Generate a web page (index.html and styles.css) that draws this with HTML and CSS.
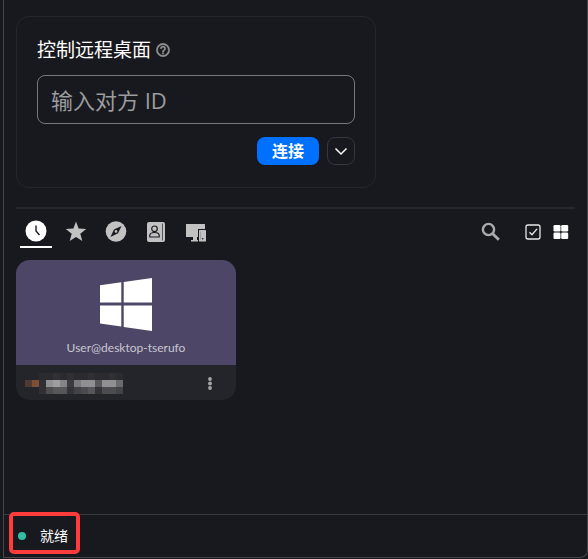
FILE: index.html
```
<!DOCTYPE html>
<html lang="zh-CN">
<head>
<meta charset="utf-8">
<meta name="viewport" content="width=device-width, initial-scale=1">
<title>控制远程桌面</title>
<link rel="stylesheet" href="styles.css">
</head>
<body>
<div class="window">
  <main class="main">
    <form class="connect">
      <div class="connect-head">
        <label class="connect-title" for="peer-id">控制远程桌面</label>
        <svg class="help" viewBox="0 0 24 24"><path d="M11 18h2v-2h-2v2zm1-16a10 10 0 1 0 0 20 10 10 0 0 0 0-20zm0 18a8 8 0 1 1 0-16 8 8 0 0 1 0 16zm0-14a4 4 0 0 0-4 4h2c0-1.100.9-2 2-2s2 .9 2 2c0 2-3 1.750-3 5h2c0-2.250 3-2.500 3-5a4 4 0 0 0-4-4z" stroke="currentColor" stroke-width=".7"/></svg>
      </div>
      <input class="peer-id" id="peer-id" type="text" placeholder="输入对方 ID">
      <div class="connect-actions">
        <button class="btn-connect" type="button">连接</button>
        <button class="btn-more" type="button" aria-label="更多">
          <svg viewBox="0 0 14 14"><path d="M1.500 4.500 7 10l5.500-5.500" fill="none" stroke="currentColor" stroke-width="1.500"/></svg>
        </button>
      </div>
    </form>

    <nav class="toolbar">
      <div class="tabs">
        <button class="tab tab-active" type="button" aria-label="最近">
          <svg viewBox="0 0 22 22"><circle cx="11" cy="11" r="10.500" fill="currentColor"/><path d="M11 5.500V11l3.500 4" fill="none" stroke="#18191e" stroke-width="1.400"/></svg>
        </button>
        <button class="tab" type="button" aria-label="收藏">
          <svg viewBox="0 0 22 22"><path fill="currentColor" d="M11 1.500l2.600 7 7.600.4-5.900 4.800 2 7.300L11 17l-6.300 4 2-7.300L.8 8.900l7.600-.4z"/></svg>
        </button>
        <button class="tab" type="button" aria-label="发现">
          <svg viewBox="0 0 22 22"><circle cx="11" cy="11.500" r="10.300" fill="currentColor"/><path d="M16.500 6 13 13.200 5.500 17 9 9.600z" fill="#18191e"/><circle cx="11" cy="11.400" r="1.300" fill="currentColor"/></svg>
        </button>
        <button class="tab" type="button" aria-label="地址簿">
          <svg viewBox="0 0 22 22"><rect x="2" y="2" width="18" height="20" rx="2" fill="currentColor"/><path d="M17.500 3.500v17" stroke="#55565a" stroke-width="1"/><g fill="none" stroke="#18191e" stroke-width="1.200"><circle cx="9.500" cy="8.800" r="2.800"/><path d="M4.800 17v-1.500c0-2 1.500-3 4.700-3s4.700 1 4.700 3V17z"/></g></svg>
        </button>
        <button class="tab" type="button" aria-label="设备">
          <svg viewBox="0 0 22 22"><path fill="currentColor" d="M1 4h19v13H1zM8 17h4v3h1v1.500H6V20h2z"/><rect x="13" y="9" width="9" height="13" fill="#18191e"/><rect x="14" y="10" width="7" height="11.500" rx=".5" fill="currentColor"/><path d="M15.500 11.500v8" stroke="#8b8c8f" stroke-width=".6"/><circle cx="17.700" cy="18.700" r=".8" fill="#18191e"/></svg>
        </button>
      </div>
      <div class="tools">
        <button class="tool" type="button" aria-label="搜索">
          <svg viewBox="0 0 20 20"><circle cx="7.500" cy="7.500" r="5.600" fill="none" stroke="#aaabad" stroke-width="2.400"/><path d="m11.500 11.500 6.300 6.300" stroke="#aaabad" stroke-width="2.800"/></svg>
        </button>
        <button class="tool tool-select" type="button" aria-label="选择">
          <svg viewBox="0 0 20 20"><rect x="3" y="3" width="14" height="14" rx="2" fill="none" stroke="#e8e8e8" stroke-width="1.300"/><path d="m6.500 10.200 2.500 2.500 5-5.800" fill="none" stroke="#e8e8e8" stroke-width="1.400"/></svg>
        </button>
        <button class="tool" type="button" aria-label="网格视图">
          <svg viewBox="0 0 20 20" fill="#fff"><rect x="2.500" y="3" width="7" height="6.500" rx="1.300"/><rect x="10.200" y="3" width="7" height="6.500" rx="1.300"/><rect x="2.500" y="10.500" width="7" height="6.500" rx="1.300"/><rect x="10.200" y="10.500" width="7" height="6.500" rx="1.300"/></svg>
        </button>
      </div>
    </nav>

    <section class="peers">
      <article class="peer">
        <div class="peer-cover">
          <svg class="peer-os" viewBox="0 0 52 53" fill="#fff"><path d="M0 7.200 21.300 4.200v20.300H0zM23.700 3.900 52 0v24.500H23.700zM0 27.500h21.300v21L0 45.500zM23.700 27.500H52V53l-28.300-4z"/></svg>
          <span class="peer-user">User@desktop-tserufo</span>
        </div>
        <div class="peer-foot">
          <svg class="peer-name" viewBox="0 0 14 3" preserveAspectRatio="none" shape-rendering="crispEdges">
            <path fill="#2b2b2f" d="M2 0h12v1H2z"/><path fill="#303034" d="M4 0h1v1H4zM6 0h1v1H6zM9 0h1v1H9zM12 0h1v1h-1z"/>
            <path fill="#503b32" d="M0 1h1v1H0z"/><path fill="#7d5035" d="M1 1h1v1H1z"/><path fill="#303034" d="M2 1h1v2H2z"/>
            <path fill="#909093" d="M3 1h1v1H3zM8 1h2v1H8zM11 1h2v1h-2z"/><path fill="#9e9ea0" d="M4 1h1v1H4z"/><path fill="#858588" d="M5 1h1v1H5z"/><path fill="#3c3c40" d="M6 1h1v1H6z"/><path fill="#7d7b81" d="M7 1h1v1H7z"/><path fill="#58585b" d="M10 1h1v1h-1z"/><path fill="#6a6b6e" d="M13 1h1v1h-1z"/>
            <path fill="#4c4c4f" d="M3 2h1v1H3zM8 2h1v1H8zM11 2h2v1h-2z"/><path fill="#57575a" d="M4 2h2v1H4zM9 2h1v1H9z"/><path fill="#343438" d="M6 2h1v1H6zM10 2h1v1h-1z"/><path fill="#434347" d="M7 2h1v1H7zM13 2h1v1h-1z"/>
          </svg>
          <button class="peer-menu" type="button" aria-label="菜单">
            <svg viewBox="0 0 6 14" fill="#a5a5a8"><circle cx="3" cy="2" r="1.900"/><circle cx="3" cy="6.500" r="1.900"/><circle cx="3" cy="11" r="1.900"/></svg>
          </button>
        </div>
      </article>
    </section>
  </main>

  <footer class="status">
    <span class="status-dot"></span>
    <span class="status-text">就绪</span>
    <span class="status-mark"></span>
  </footer>
</div>
</body>
</html>
```
FILE: styles.css
```
* { box-sizing: border-box; }

body {
  margin: 0;
  background: #18191e;
  color: #fff;
  font-family: "Open Sans", "Noto Sans CJK SC", sans-serif;
}

button {
  display: flex;
  align-items: center;
  justify-content: center;
  padding: 0;
  border: 0;
  background: none;
  color: inherit;
  font-family: inherit;
}

svg { display: block; }

.window {
  display: flex;
  flex-direction: column;
  min-height: calc(100vh - 1px);
  margin-left: 3px;
  border: solid #45464a;
  border-width: 0 1px 1px;
  border-bottom-right-radius: 8px;
}

.main {
  flex: 1;
  padding: 16px 12px 0;
}

.connect {
  max-width: 360px;
  padding: 20px 20px 22px;
  border: 1px solid #25262b;
  border-radius: 13px;
}

.connect-head {
  display: flex;
  align-items: center;
  gap: 4px;
  height: 26px;
  margin-bottom: 12px;
}

.connect-title {
  font-size: 19px;
  line-height: 26px;
}

.help {
  width: 16px;
  height: 16px;
  fill: #939396;
  color: #939396;
}

.peer-id {
  display: block;
  width: 100%;
  height: 49px;
  padding: 0 13px;
  border: 1px solid #77787b;
  border-radius: 8px;
  background: transparent;
  color: #fff;
  font-family: inherit;
  font-size: 22px;
}

.peer-id::placeholder {
  color: #9c9c9e;
  opacity: 1;
}

.connect-actions {
  display: flex;
  justify-content: flex-end;
  gap: 8px;
  margin-top: 13px;
}

.btn-connect {
  width: 62px;
  height: 28px;
  border-radius: 8px;
  background: #0071ff;
  font-size: 16px;
  font-weight: 700;
  line-height: 28px;
}

.btn-more {
  width: 28px;
  height: 28px;
  border: 1px solid #36373b;
  border-radius: 8px;
}

.btn-more svg {
  width: 14px;
  height: 14px;
}

.toolbar {
  display: flex;
  justify-content: space-between;
  margin-top: 19px;
  padding: 7px 4px 0;
  border-top: 2px solid #27282c;
}

.tabs {
  display: flex;
  gap: 8px;
}

.tab {
  width: 32px;
  height: 32px;
  border-bottom: 2px solid transparent;
  color: #c2c2c2;
}

.tab-active {
  border-bottom-color: #fff;
  color: #fff;
}

.tab svg {
  width: 22px;
  height: 22px;
}

.tools {
  display: flex;
  align-items: center;
  gap: 8px;
  height: 32px;
}

.tool svg {
  width: 20px;
  height: 20px;
}

.tool-select { margin-left: 14px; }

.peers {
  display: flex;
  flex-wrap: wrap;
  gap: 12px;
  padding: 12px 0;
}

.peer {
  width: 220px;
  overflow: hidden;
  border-radius: 14px;
  background: #24252a;
}

.peer-cover {
  display: flex;
  flex-direction: column;
  align-items: center;
  gap: 8px;
  height: 105px;
  padding-top: 18px;
  background: #4d4667;
}

.peer-os {
  width: 52px;
  height: 53px;
}

.peer-user {
  color: #c9c7d1;
  font-family: Lato, sans-serif;
  font-size: 12px;
  line-height: 18px;
}

.peer-foot {
  display: flex;
  align-items: center;
  justify-content: space-between;
  height: 35px;
  padding: 2px 23px 0 9px;
}

.peer-name {
  width: 98px;
  height: 21px;
}

.peer-menu svg {
  width: 6px;
  height: 14px;
}

.status {
  position: relative;
  display: flex;
  align-items: center;
  gap: 14px;
  height: 43px;
  padding-left: 14px;
  border-top: 1px solid #3a3b3f;
}

.status-dot {
  width: 8px;
  height: 8px;
  border-radius: 50%;
  background: #32bea6;
}

.status-text {
  font-size: 14px;
  line-height: 20px;
}

.status-mark {
  position: absolute;
  top: -3px;
  left: 5px;
  width: 71px;
  height: 42px;
  border: 4px solid #ff3b3b;
  border-radius: 5px;
}
```
